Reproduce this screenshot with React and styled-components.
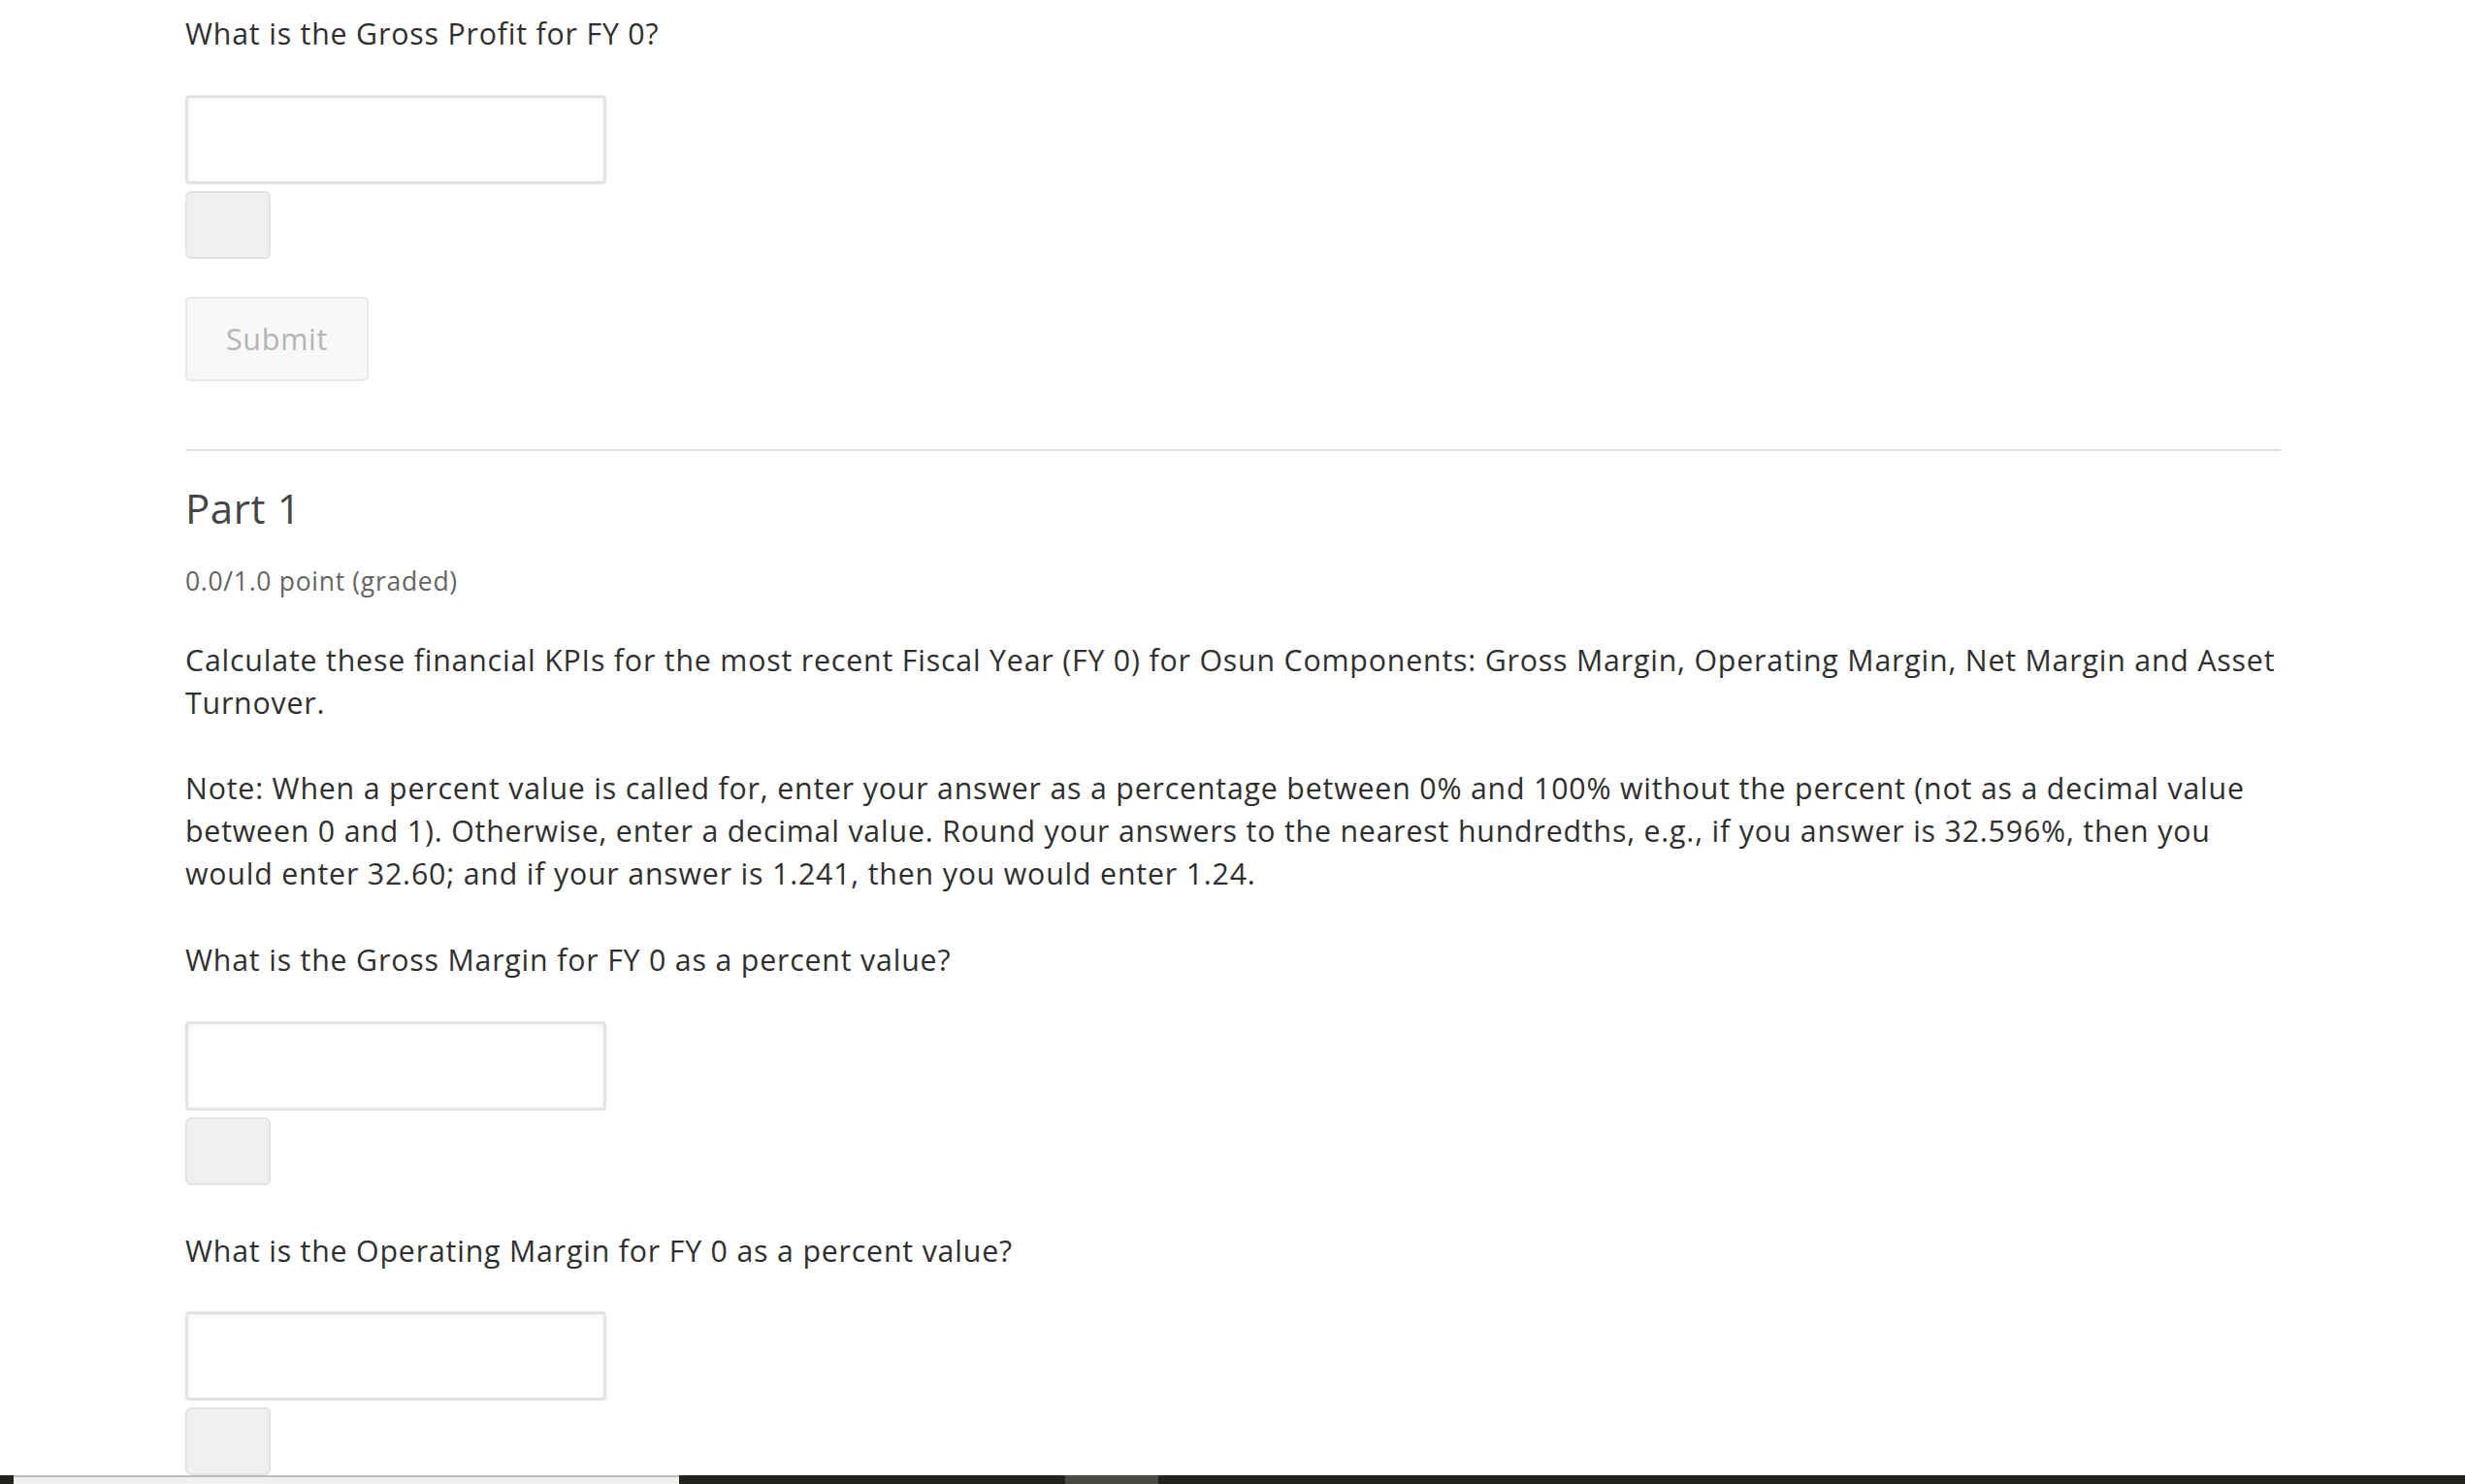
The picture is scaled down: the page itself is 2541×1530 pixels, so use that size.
import styled, { createGlobalStyle } from "styled-components";

const GlobalStyle = createGlobalStyle`
	html, body {
		margin: 0;
		padding: 0;
		background: #fff;
	}
	body {
		font-family: "Open Sans", "Liberation Sans", sans-serif;
		color: #313131;
	}
`;

const Page = styled.main`
	width: 2165px;
	padding: 13px 0 0 191px;
`;

const Question = styled.p`
	margin: 0;
	font-size: 30.3px;
	letter-spacing: 0.82px;
	line-height: 43.8px;
	color: #2f2f2f;
`;

const Text = styled.p`
	margin: 0 0 45px;
	font-size: 30.3px;
	letter-spacing: 0.82px;
	line-height: 43.8px;
	color: #2f2f2f;
`;

const AnswerBlock = styled.div`
	display: flex;
	flex-direction: column;
	align-items: flex-start;
	gap: 7px;
	margin-top: 41px;
	margin-bottom: ${(p) => p.$after}px;
`;

const Input = styled.input`
	box-sizing: border-box;
	width: 434px;
	height: 92px;
	border: 3px solid #e3e3e3;
	border-radius: 4px;
	background: #fff;
	box-shadow: inset 0 1px 6px rgba(0, 0, 0, 0.06);
	font-family: inherit;
	font-size: 29px;
	padding: 0 14px;
	outline: none;
`;

const StatusButton = styled.button`
	box-sizing: border-box;
	width: 88px;
	height: 70px;
	border: 2px solid #e3e3e3;
	border-radius: 6px;
	background: #f0f0f0;
	padding: 0;
`;

const SubmitButton = styled.button`
	display: block;
	box-sizing: border-box;
	width: 189px;
	height: 87px;
	border: 2px solid #e8e8e8;
	border-radius: 5px;
	background: #f8f8f8;
	color: #b4b4b4;
	font-family: "Open Sans", "Liberation Sans", sans-serif;
	font-size: 30.5px;
	letter-spacing: 0.7px;
	padding: 0;
	margin: 39px 0 70px;
`;

const Divider = styled.hr`
	width: 2160px;
	border: 0;
	height: 2px;
	background: #dedede;
	margin: 0 0 34px;
`;

const PartTitle = styled.h2`
	margin: 0;
	font-size: 42px;
	font-weight: 400;
	letter-spacing: 0.6px;
	line-height: 50px;
	color: #454545;
`;

const Points = styled.div`
	margin: 31px 0 40px;
	font-size: 26.5px;
	letter-spacing: 0.7px;
	line-height: 39px;
	color: #646464;
`;

const TaskBar = styled.div`
	position: fixed;
	left: 0;
	right: 0;
	bottom: 0;
	height: 9px;
	display: flex;
	background: #23221c;
`;

const TaskEdge = styled.div`
	width: 14px;
	background: #23221c;
`;

const TaskWindow = styled.div`
	box-sizing: border-box;
	width: 686px;
	background: #f0f0f0;
	border-top: 2px solid #bdbdbd;
`;

const TaskSpacer = styled.div`
	width: ${(p) => p.$w}px;
`;

const TaskItem = styled.div`
	width: 96px;
	background: #4b4b43;
`;

const Answer = ({ after }) => (
	<AnswerBlock $after={after}>
		<Input type="text" />
		<StatusButton aria-label="status" />
	</AnswerBlock>
);

const App = () => {
	return (
		<>
			<GlobalStyle />
			<Page>
				<Question>What is the Gross Profit for FY 0?</Question>
				<Answer after={0} />
				<SubmitButton>Submit</SubmitButton>
				<Divider />
				<PartTitle>Part 1</PartTitle>
				<Points>0.0/1.0 point (graded)</Points>
				<Text>
					Calculate these financial KPIs for the most recent Fiscal Year (FY 0) for Osun Components: Gross Margin,
					Operating Margin, Net Margin and Asset Turnover.
				</Text>
				<Text>
					Note: When a percent value is called for, enter your answer as a percentage between 0% and 100% without the
					percent (not as a decimal value between 0 and 1). Otherwise, enter a decimal value. Round your answers to the
					nearest hundredths, e.g., if you answer is 32.596%, then you would enter 32.60; and if your answer is 1.241,
					then you would enter 1.24.
				</Text>
				<Question>What is the Gross Margin for FY 0 as a percent value?</Question>
				<Answer after={46} />
				<Question>What is the Operating Margin for FY 0 as a percent value?</Question>
				<Answer after={0} />
			</Page>
			<TaskBar>
				<TaskEdge />
				<TaskWindow />
				<TaskSpacer $w={398} />
				<TaskItem />
			</TaskBar>
		</>
	);
};

export default App;
